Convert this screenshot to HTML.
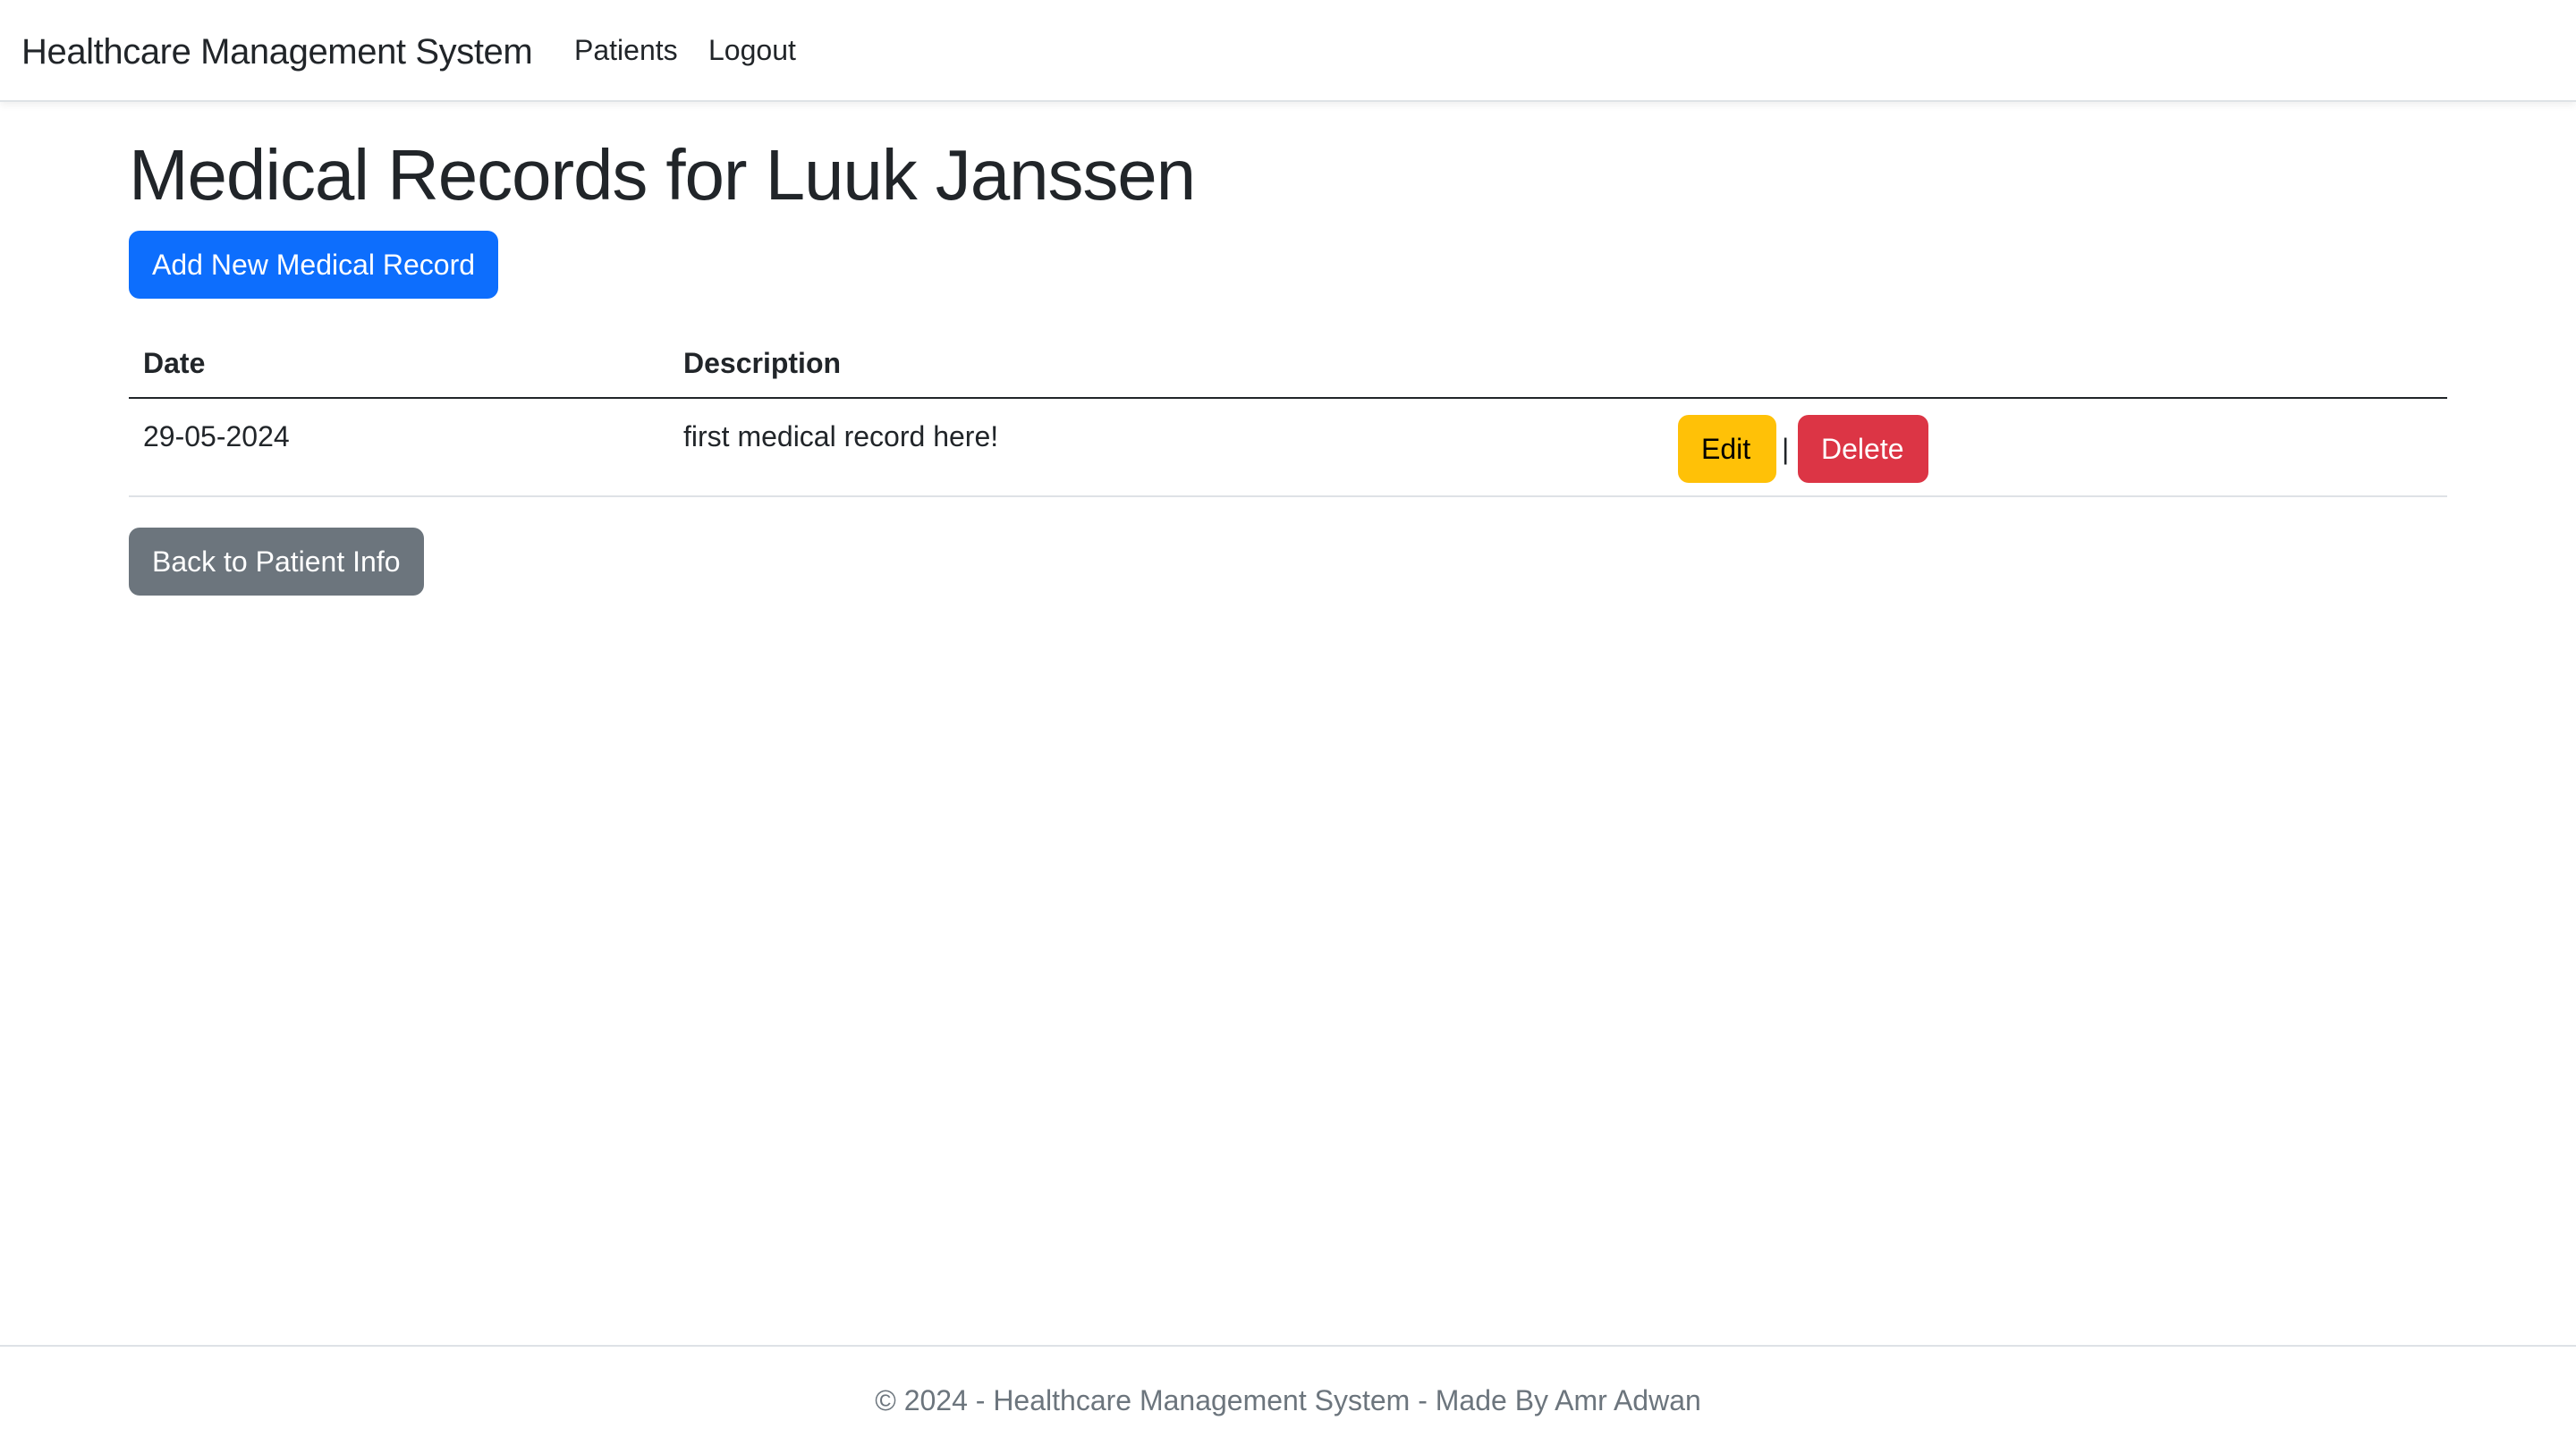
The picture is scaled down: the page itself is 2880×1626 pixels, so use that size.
<!DOCTYPE html>
<html><head><meta charset="utf-8">
<style>
html,body{margin:0;padding:0;}
body{zoom:2;width:1440px;height:813px;position:relative;overflow:hidden;background:#fff;
font-family:"Liberation Sans",sans-serif;color:#212529;font-size:16px;line-height:1.5;}
.nav{height:56px;border-bottom:1px solid #dee2e6;box-shadow:0 2px 4px rgba(0,0,0,.06);position:relative;}
.brand{position:absolute;left:12px;top:14px;font-size:20px;line-height:30px;letter-spacing:-0.2px;}
.l1{position:absolute;left:321px;top:16px;}
.l2{position:absolute;left:396px;top:16px;}
h1{position:absolute;left:72px;top:74px;margin:0;font-size:40px;font-weight:500;line-height:48px;letter-spacing:-0.55px;}
.btn{position:absolute;height:38px;line-height:38px;padding:0 13px;border-radius:6px;color:#fff;font-size:16px;box-sizing:border-box;}
.th{position:absolute;top:191px;font-weight:bold;}
.td{position:absolute;top:232px;}
.line{position:absolute;left:72px;width:1296px;}
.foot{position:absolute;left:0;right:0;top:752px;border-top:1px solid #dee2e6;text-align:center;color:#6c757d;padding-top:18px;}
</style></head><body>
<div class="nav"><span class="brand">Healthcare Management System</span><span class="l1">Patients</span><span class="l2">Logout</span></div>
<h1>Medical Records for Luuk Janssen</h1>
<div class="btn" style="left:72px;top:129px;background:#0d6efd;">Add New Medical Record</div>
<div class="th" style="left:80px">Date</div>
<div class="th" style="left:382px">Description</div>
<div class="line" style="top:222px;border-top:1px solid #212529"></div>
<div class="td" style="left:80px">29-05-2024</div>
<div class="td" style="left:382px">first medical record here!</div>
<div class="btn" style="left:938px;top:232px;width:55px;background:#ffc107;color:#000;">Edit</div>
<div class="td" style="left:996px;top:239px">|</div>
<div class="btn" style="left:1005px;top:232px;width:73px;background:#dc3545;">Delete</div>
<div class="line" style="top:277px;border-top:1px solid #dee2e6"></div>
<div class="btn" style="left:72px;top:295px;background:#6c757d;">Back to Patient Info</div>
<div class="foot">© 2024 - Healthcare Management System - Made By Amr Adwan</div>
</body></html>
